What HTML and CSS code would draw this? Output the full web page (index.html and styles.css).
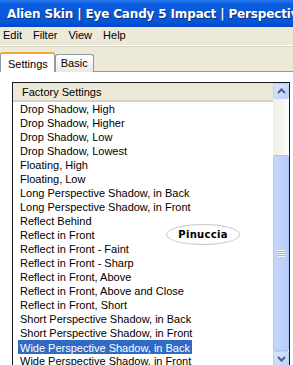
FILE: index.html
```html
<!DOCTYPE html>
<html>
<head>
    <title>Eye Candy 5 Impact</title>
    <link rel="stylesheet" href="styles.css">
</head>
<body>
    <div class="window">
        <div class="titlebar">
            <svg class="app-icon" width="14" height="16" viewBox="0 0 14 16">
                <ellipse cx="7" cy="8.5" rx="6" ry="7" fill="#111"/>
                <ellipse cx="5.5" cy="6.5" rx="3" ry="2.4" fill="#fff" transform="rotate(-30 5.5 6.5)"/>
                <circle cx="5" cy="7" r="1.4" fill="#111"/>
            </svg>
            <span class="title">Alien Skin | Eye Candy 5 Impact | Perspective Shadow</span>
        </div>
        <div class="menubar">
            <span>Edit</span>
            <span>Filter</span>
            <span>View</span>
            <span>Help</span>
        </div>
        <div class="tabs">
            <div class="tab active">Settings</div>
            <div class="tab">Basic</div>
            <div class="tab-fill"></div>
        </div>
        <div class="panel">
            <div class="listbox">
                <div class="list">
                    <div class="list-header">Factory Settings</div>
                    <div class="item"><span>Drop Shadow, High</span></div>
                    <div class="item"><span>Drop Shadow, Higher</span></div>
                    <div class="item"><span>Drop Shadow, Low</span></div>
                    <div class="item"><span>Drop Shadow, Lowest</span></div>
                    <div class="item"><span>Floating, High</span></div>
                    <div class="item"><span>Floating, Low</span></div>
                    <div class="item"><span>Long Perspective Shadow, in Back</span></div>
                    <div class="item"><span>Long Perspective Shadow, in Front</span></div>
                    <div class="item"><span>Reflect Behind</span></div>
                    <div class="item"><span>Reflect in Front</span></div>
                    <div class="item"><span>Reflect in Front - Faint</span></div>
                    <div class="item"><span>Reflect in Front - Sharp</span></div>
                    <div class="item"><span>Reflect in Front, Above</span></div>
                    <div class="item"><span>Reflect in Front, Above and Close</span></div>
                    <div class="item"><span>Reflect in Front, Short</span></div>
                    <div class="item"><span>Short Perspective Shadow, in Back</span></div>
                    <div class="item"><span>Short Perspective Shadow, in Front</span></div>
                    <div class="item selected"><span>Wide Perspective Shadow, in Back</span></div>
                    <div class="item"><span>Wide Perspective Shadow, in Front</span></div>
                </div>
                <div class="scrollbar">
                    <div class="sb-btn">
                        <svg width="9" height="6" viewBox="0 0 9 6"><path d="M1 5 L4.5 1.5 L8 5" fill="none" stroke="#4d6185" stroke-width="2"/></svg>
                    </div>
                    <div class="sb-track">
                        <div class="sb-thumb">
                            <div class="grip"></div>
                        </div>
                    </div>
                    <div class="sb-btn">
                        <svg width="9" height="6" viewBox="0 0 9 6"><path d="M1 1 L4.5 4.5 L8 1" fill="none" stroke="#4d6185" stroke-width="2"/></svg>
                    </div>
                </div>
            </div>
            <div class="watermark">Pinuccia</div>
        </div>
    </div>
</body>
</html>
```

FILE: styles.css
```css
body {
    margin: 0;
    font-family: "Liberation Sans", Arial, sans-serif;
    font-size: 11px;
    color: black;
    background-color: #ece9d8;
}
.window {
    width: 293px;
    height: 365px;
    overflow: hidden;
}
.titlebar {
    height: 27px;
    display: flex;
    align-items: center;
    gap: 5px;
    padding-left: 2px;
    background: linear-gradient(#2a7af2, #0a5ddc 15%, #0656da 80%, #0347c2);
    white-space: nowrap;
    overflow: hidden;
}
.titlebar .title {
    color: white;
    font-family: "DejaVu Sans", sans-serif;
    font-weight: bold;
    font-size: 12px;
    letter-spacing: -0.15px;
    text-shadow: 1px 1px 0 #0a2f7a;
}
.menubar {
    height: 16px;
    display: flex;
    gap: 11px;
    padding: 2px 0 0 3px;
    font-size: 11px;
    border-bottom: 1px solid #fff;
    box-shadow: 0 1px 0 #d8d4c4;
}
.tabs {
    display: flex;
    align-items: flex-end;
    height: 26px;
}
.tab {
    height: 17px;
    padding: 0 5px;
    line-height: 17px;
    border: 1px solid #919b9c;
    border-bottom: none;
    border-radius: 3px 3px 0 0;
    background: linear-gradient(#fff, #f3f3ef 60%, #e8e7e0);
}
.tab.active {
    height: 19px;
    line-height: 21px;
    padding: 0 6px 0 7px;
    border-top: 2px solid #f2a436;
    background: white;
    position: relative;
    top: 1px;
}
.tab-fill {
    flex: 1;
    border-bottom: 1px solid #919b9c;
}
.panel {
    position: relative;
    background: white;
    padding: 10px 0 0 12px;
    height: 300px;
}
.listbox {
    display: flex;
    width: 276px;
    height: 284px;
    border: 1px solid #1a1a1a;
    background: white;
}
.list {
    flex: 1;
    overflow: hidden;
}
.list-header {
    height: 17px;
    line-height: 18px;
    padding-left: 9px;
    background: #ece9d8;
    border-bottom: 2px solid #d6d2c2;
}
.item {
    height: 14px;
    line-height: 14px;
    padding-left: 5px;
    white-space: nowrap;
}
.item span {
    padding: 1px 2px 0;
}
.item.selected span {
    display: inline-block;
    height: 13px;
    background: #316ac5;
    color: white;
}
.scrollbar {
    width: 16px;
    display: flex;
    flex-direction: column;
    background: linear-gradient(90deg, #eeede5, #fcfcfa);
}
.sb-btn {
    height: 14px;
    display: flex;
    align-items: center;
    justify-content: center;
    border: 1px solid #bdcef8;
    border-radius: 2px;
    background: linear-gradient(135deg, #dbe6fe, #bcd0fa);
}
.sb-track {
    flex: 1;
    display: flex;
    flex-direction: column;
    justify-content: flex-end;
}
.sb-thumb {
    height: 194px;
    display: flex;
    align-items: center;
    justify-content: center;
    border: 1px solid #adc3f6;
    border-radius: 2px;
    background: linear-gradient(90deg, #c6d6fc, #b8ccf9);
}
.grip {
    width: 7px;
    height: 7px;
    background: repeating-linear-gradient(#eef3fe 0 1px, #9fb6ea 1px 2px);
}
.watermark {
    position: absolute;
    left: 166px;
    top: 152px;
    width: 72px;
    height: 19px;
    line-height: 19px;
    text-align: center;
    border: 1px solid #c8c8c8;
    border-radius: 50%;
    background: white;
    font-family: "DejaVu Sans", sans-serif;
    font-weight: bold;
    font-size: 10px;
    letter-spacing: 0.3px;
}
```
